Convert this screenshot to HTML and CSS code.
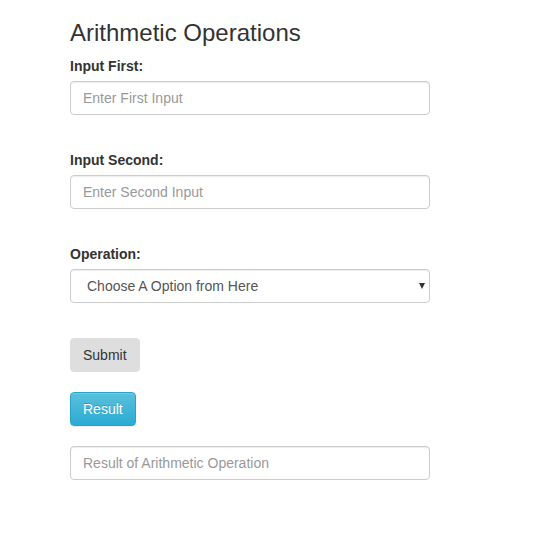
FILE: index.html
```html
<!DOCTYPE html>
<html>
<head>
<meta charset="utf-8">
<link rel="stylesheet" href="styles.css">
</head>
<body>
<div class="container">
  <h3 class="title">Arithmetic Operations</h3>
  <form class="form">
    <div class="group">
      <label class="label">Input First:</label>
      <input class="control" type="text" placeholder="Enter First Input">
    </div>
    <div class="group">
      <label class="label">Input Second:</label>
      <input class="control" type="text" placeholder="Enter Second Input">
    </div>
    <div class="group">
      <label class="label">Operation:</label>
      <div class="select-wrap">
        <select class="control select">
          <option>Choose A Option from Here</option>
        </select>
      </div>
    </div>
    <div class="actions">
      <button type="button" class="btn btn-default">Submit</button>
      <button type="button" class="btn btn-info">Result</button>
      <input class="control" type="text" placeholder="Result of Arithmetic Operation">
    </div>
  </form>
</div>
</body>
</html>
```
FILE: styles.css
```css
* { box-sizing: border-box; }
html, body { margin: 0; padding: 0; background: #fff; }
body {
  font-family: "Liberation Sans", Arial, sans-serif;
  font-size: 14px;
  line-height: 20px;
  color: #333;
}
.container { width: 360px; margin-left: 70px; }
.title {
  font-size: 24px;
  font-weight: 500;
  line-height: 26.4px;
  margin: 20px 0 10px;
}
.form { display: flex; flex-direction: column; }
.group { display: flex; flex-direction: column; margin-bottom: 35px; }
.label {
  display: block;
  font-weight: bold;
  margin-bottom: 5px;
}
.control {
  display: block;
  width: 360px;
  height: 34px;
  padding: 6px 12px;
  font-family: inherit;
  font-size: 14px;
  line-height: 20px;
  color: #555;
  background: #fff;
  border: 1px solid #ccc;
  border-radius: 4px;
  box-shadow: inset 0 1px 1px rgba(0,0,0,.075);
  outline: none;
}
.control::placeholder { color: #999; }
.select-wrap { position: relative; width: 360px; }
.select {
  -webkit-appearance: none;
  appearance: none;
  padding-left: 16px;
  color: #555;
}
.select-wrap::after {
  content: "";
  position: absolute;
  right: 5px;
  top: 14px;
  border-left: 3px solid transparent;
  border-right: 3px solid transparent;
  border-top: 6px solid #333;
  pointer-events: none;
}
.actions { display: flex; flex-direction: column; align-items: flex-start; gap: 20px; }
.btn {
  display: inline-block;
  height: 34px;
  padding: 6px 12px;
  font-family: inherit;
  font-size: 14px;
  line-height: 20px;
  border-radius: 4px;
  border: 1px solid transparent;
  cursor: pointer;
}
.btn-default {
  background: #dedede;
  border-color: #dedede;
  color: #333;
}
.btn-info {
  background: linear-gradient(to bottom, #5bc0de 0, #2aabd2 100%);
  border-color: #28a4c9;
  color: #fff;
  text-shadow: 0 -1px 0 rgba(0,0,0,.2);
  box-shadow: inset 0 1px 0 rgba(255,255,255,.15), 0 1px 1px rgba(0,0,0,.075);
}
```
